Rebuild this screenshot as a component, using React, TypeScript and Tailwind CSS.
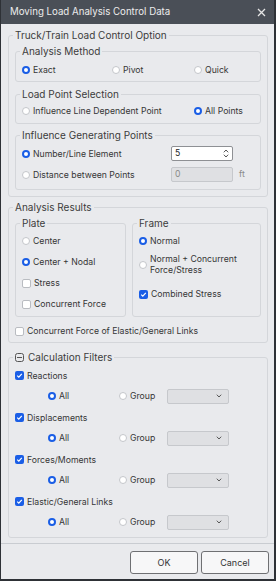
import React from 'react';

const Radio: React.FC<{ on?: boolean }> = ({ on }) => (
  <span
    className={
      on
        ? 'inline-block w-[8px] h-[8px] rounded-full border-[2.5px] border-[#1a5ee6] bg-white shrink-0'
        : 'inline-block w-[8px] h-[8px] rounded-full border border-[#c4c6ca] bg-white shrink-0'
    }
  />
);

const Check: React.FC<{ on?: boolean }> = ({ on }) =>
  on ? (
    <span className="inline-flex items-center justify-center w-[9px] h-[9px] rounded-[2px] bg-[#1a5ee6] shrink-0">
      <svg width="7" height="7" viewBox="0 0 7 7">
        <path d="M1.2 3.6 L2.8 5.1 L5.8 1.8" fill="none" stroke="white" strokeWidth="1.2" />
      </svg>
    </span>
  ) : (
    <span className="inline-block w-[9px] h-[9px] rounded-[2px] border border-[#b9bcc1] bg-white shrink-0" />
  );

const Opt: React.FC<{ on?: boolean; label: string; check?: boolean }> = ({ on, label, check }) => (
  <div className="flex items-center gap-[3px] h-[12px] leading-[12px]">
    {check ? <Check on={on} /> : <Radio on={on} />}
    <span>{label}</span>
  </div>
);

const Chevron: React.FC<{ up?: boolean }> = ({ up }) => (
  <svg width="6" height="4" viewBox="0 0 6 4">
    <path d={up ? 'M0.8 3.3 L3 1 L5.2 3.3' : 'M0.8 0.7 L3 3 L5.2 0.7'} fill="none" stroke="#555" strokeWidth="1" />
  </svg>
);

const Box: React.FC<{ title: React.ReactNode; className?: string; children: React.ReactNode }> = ({ title, className, children }) => (
  <fieldset className={'border border-[#d4d6da] rounded-[3px] px-[6px] ' + (className || '')}>
    <legend className="-ml-[2px] px-[2px] leading-[12px] text-[10px] text-[#3c3c3c]">{title}</legend>
    {children}
  </fieldset>
);

const GroupRow: React.FC = () => (
  <div className="flex items-center h-[15px] mt-[7px]">
    <div className="w-[33px]" />
    <div className="w-[71px]"><Opt on label="All" /></div>
    <div className="w-[48px]"><Opt label="Group" /></div>
    <div className="w-[62px] h-[15px] rounded-[2px] border border-[#c6c8cc] bg-[#dfe0e3] flex items-center justify-end pr-[6px]">
      <Chevron />
    </div>
  </div>
);

export default function App() {
  return (
    <div
      className="w-[276px] h-[581px] flex flex-col bg-[#e9eaed] border-l border-r-2 border-b-2 border-[#2e3136] text-[8.7px] text-[#363636]"
      style={{ fontFamily: 'Inter, "Noto Sans", sans-serif' }}
    >
      <div className="h-[24px] shrink-0 bg-[#4a4f57] flex items-center justify-between pl-[9px] pr-[8px] text-[#ececec] text-[9.7px]">
        <span>Moving Load Analysis Control Data</span>
        <svg width="9" height="9" viewBox="0 0 9 9">
          <path d="M1 1 L8 8 M8 1 L1 8" stroke="#e6e6e6" strokeWidth="1.3" />
        </svg>
      </div>

      <div className="flex-1 pl-[7px] pr-[6px] pt-[5px]">
        <Box title="Truck/Train Load Control Option" className="pb-[6px]">
          <Box title="Analysis Method" className="mt-[4px] pt-[7px] pb-[5px]">
            <div className="grid grid-cols-[90px_82px_1fr]">
              <Opt on label="Exact" />
              <Opt label="Pivot" />
              <Opt label="Quick" />
            </div>
          </Box>
          <Box title="Load Point Selection" className="mt-[6px] pt-[5px] pb-[6px]">
            <div className="grid grid-cols-[172px_1fr]">
              <Opt label="Influence Line Dependent Point" />
              <Opt on label="All Points" />
            </div>
          </Box>
          <Box title="Influence Generating Points" className="mt-[5px] pt-[5px] pb-[7px]">
            <div className="flex items-center h-[15px]">
              <div className="w-[149px]"><Opt on label="Number/Line Element" /></div>
              <div className="w-[62px] h-[15px] rounded-[2px] border border-[#8e9094] bg-white flex items-center justify-between pl-[3px] pr-[3px]">
                <span className="text-[#222]">5</span>
                <div className="flex flex-col gap-[1px]">
                  <Chevron up />
                  <Chevron />
                </div>
              </div>
            </div>
            <div className="flex items-center h-[15px] mt-[6px]">
              <div className="w-[149px]"><Opt label="Distance between Points" /></div>
              <div className="w-[62px] h-[15px] rounded-[2px] border border-[#c6c8cc] bg-[#dfe0e3] flex items-center pl-[3px] text-[#8a8a8a]">
                0
              </div>
              <span className="ml-[6px] text-[#8a8a8a]">ft</span>
            </div>
          </Box>
        </Box>

        <Box title="Analysis Results" className="mt-[4px] pb-[5px]">
          <div className="flex gap-[6px] mt-[4px]">
            <Box title="Plate" className="w-[111px] pt-[6px] pb-[6px]">
              <div className="flex flex-col gap-[9px]">
                <Opt label="Center" />
                <Opt on label="Center + Nodal" />
                <Opt check label="Stress" />
                <Opt check label="Concurrent Force" />
              </div>
            </Box>
            <Box title="Frame" className="flex-1 pt-[6px] pb-[6px]">
              <Opt on label="Normal" />
              <div className="flex items-center gap-[3px] mt-[7px] leading-[11px]">
                <Radio />
                <span>
                  Normal + Concurrent
                  <br />
                  Force/Stress
                </span>
              </div>
              <div className="mt-[12px]">
                <Opt check on label="Combined Stress" />
              </div>
            </Box>
          </div>
          <div className="mt-[8px]">
            <Opt check label="Concurrent Force of Elastic/General Links" />
          </div>
        </Box>

        <Box
          title={
            <span className="inline-flex items-center gap-[4px]">
              <svg width="9" height="9" viewBox="0 0 9 9">
                <rect x="0.5" y="0.5" width="8" height="8" rx="2" fill="none" stroke="#555" />
                <path d="M2 4.5 H7" stroke="#555" />
              </svg>
              Calculation Filters
            </span>
          }
          className="mt-[8px] pt-[6px] pb-[7px]"
        >
          <Opt check on label="Reactions" />
          <GroupRow />
          <div className="mt-[8px]"><Opt check on label="Displacements" /></div>
          <GroupRow />
          <div className="mt-[8px]"><Opt check on label="Forces/Moments" /></div>
          <GroupRow />
          <div className="mt-[8px]"><Opt check on label="Elastic/General Links" /></div>
          <GroupRow />
        </Box>
      </div>

      <div className="shrink-0 border-t border-[#c9ccd1] flex justify-end gap-[3px] pt-[7px] pb-[5px] pr-[5px]">
        <button className="w-[68px] h-[23px] rounded-[3px] border border-[#6f7073] bg-[#f7f7f8] text-[#333] text-[9px]">OK</button>
        <button className="w-[68px] h-[23px] rounded-[3px] border border-[#6f7073] bg-[#f7f7f8] text-[#333] text-[9px]">Cancel</button>
      </div>
    </div>
  );
}
